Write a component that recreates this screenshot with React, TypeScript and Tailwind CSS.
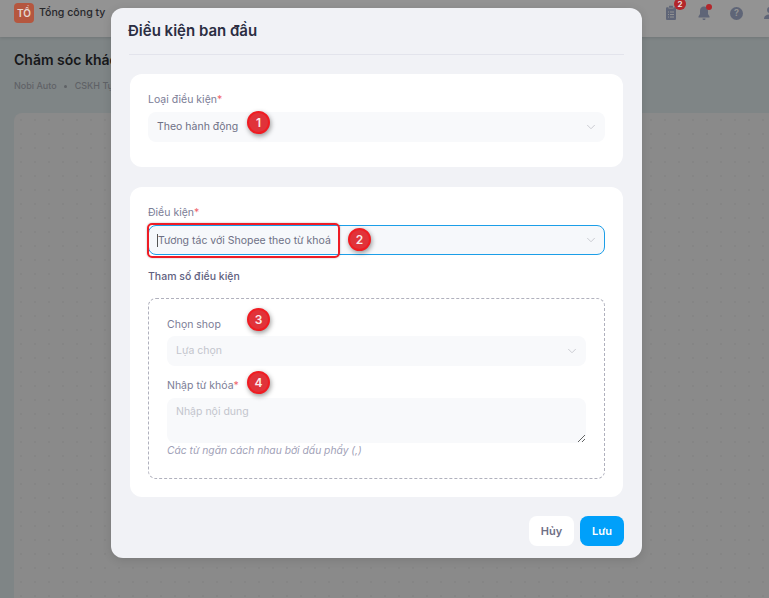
import { ChevronDown } from "lucide-react";

const font = { fontFamily: "Inter, 'Noto Sans', sans-serif" };

function Badge({ n, className }: { n: number; className: string }) {
  return (
    <div
      className={`absolute flex h-[23px] w-[23px] items-center justify-center rounded-full border-2 border-[#f01c22] bg-[#e0333a] text-[12px] font-semibold text-[#fbeaea] shadow-[1px_2px_5px_rgba(0,0,0,0.4)] ${className}`}
    >
      {n}
    </div>
  );
}

function Label({ text, required }: { text: string; required?: boolean }) {
  return (
    <div className="text-[10.5px] leading-[14px] text-[#7b7d96]">
      {text}
      {required && <span className="text-[#f0646c]">*</span>}
    </div>
  );
}

function Select({ value, muted, className }: { value: string; muted?: boolean; className: string }) {
  return (
    <div className={`flex items-center justify-between rounded-lg bg-[#f8f9fb] pl-[9px] pr-[7px] ${className}`}>
      <span className={`text-[10.5px] ${muted ? "text-[#c3c5cd]" : "text-[#6e7085]"}`}>{value}</span>
      <ChevronDown size={14} strokeWidth={1.5} className="text-[#c4c5cb]" />
    </div>
  );
}

function Background() {
  return (
    <div className="flex h-[598px] flex-col bg-[#7f8586]">
      <header className="flex h-[37px] items-start justify-between bg-[#939393] pl-[14px] pt-[3px] shadow-[0_1px_3px_rgba(0,0,0,0.12)]">
        <div className="flex h-5 items-center gap-[5px]">
          <div className="flex h-5 w-5 items-center justify-center rounded bg-[#b5573f] text-[10px] font-semibold text-[#e6d8d2]">
            TỔ
          </div>
          <span className="text-[10.6px] font-medium text-[#26272b]">Tổng công ty</span>
        </div>
        <div className="-mr-1 flex h-5 items-center">
          <div className="relative">
            <svg width="16" height="16" viewBox="0 0 16 16" fill="#5f6577">
              <path d="M3 3.5C3 2.7 3.6 2.2 4.3 2.2H5.5V3.4H10.5V2.2H11.700C12.400 2.200 13 2.700 13 3.500V13.700C13 14.400 12.400 15 11.700 15H4.300C3.600 15 3 14.400 3 13.700Z" />
              <rect x="6" y="0.800" width="4" height="2" rx="0.500" />
              <path d="M7 7H11M7 9.500H11M7 12H11M5 7H6M5 9.500H6M5 12H6" stroke="#939393" strokeWidth="1" />
            </svg>
            <div className="absolute -right-[7px] -top-[7px] flex h-3 w-3 items-center justify-center rounded-full bg-[#b3262b] text-[8px] font-semibold text-[#eee]">
              2
            </div>
          </div>
          <div className="relative ml-[17px]">
            <svg width="16" height="16" viewBox="0 0 16 16" fill="#5f6577">
              <path d="M8 1.500C5.500 1.500 4 3.400 4 5.800V9L2.500 11.500V12.500H13.500V11.500L12 9V5.800C12 3.400 10.500 1.500 8 1.500Z" />
              <path d="M6.500 13.500H9.500C9.500 14.500 8.800 15 8 15C7.200 15 6.500 14.500 6.500 13.500Z" />
            </svg>
            <div className="absolute right-0 -top-px h-[6px] w-[6px] rounded-full bg-[#b3262b]" />
          </div>
          <div className="ml-[18px] flex h-[13px] w-[13px] items-center justify-center rounded-full bg-[#5f6577] text-[9px] font-bold text-[#939393]">
            ?
          </div>
          <svg className="ml-5 shrink-0" width="10" height="14" viewBox="0 0 10 14" fill="#5f6577">
            <circle cx="7" cy="4" r="3" />
            <path d="M1 13C1 9.500 4 8.500 7 8.500C9 8.500 10 9 10 9V13Z" />
          </svg>
        </div>
      </header>
      <div className="px-[14px]">
        <h1 className="mt-[14px] text-[14px] font-semibold leading-[18px] text-[#17181a]">Chăm sóc khách hàng</h1>
        <div className="mt-[11px] flex items-center gap-[7.5px] text-[9px] font-medium leading-3 text-[#5f6266]">
          <span>Nobi Auto</span>
          <span className="h-[3px] w-[3px] rounded-full bg-[#5f6266]" />
          <span>CSKH Tự động</span>
        </div>
      </div>
      <div className="ml-[14px] mt-[21px] flex-1 rounded-tl-lg bg-[#8a8a8a] bg-[radial-gradient(#858585_1px,transparent_1px)] bg-[length:14px_14px]" />
    </div>
  );
}

export default function App() {
  return (
    <div className="relative h-[598px] w-[769px] overflow-hidden" style={font}>
      <Background />

      <div className="absolute left-[111px] top-2 h-[550px] w-[531px] rounded-xl bg-[#f1f2f6] pl-[18px] pr-[18px] shadow-[0_2px_10px_rgba(0,0,0,0.12)]">
        <div className="flex h-[47px] items-center border-b border-[#e3e4ec]">
          <h2 className="-ml-px pt-[1px] text-[15px] font-semibold text-[#2b2d42]">Điều kiện ban đầu</h2>
        </div>

        <section className="ml-px mr-px mt-[19px] h-[93px] rounded-xl bg-white px-[18px] pt-[19px]">
          <Label text="Loại điều kiện" required />
          <Select value="Theo hành động" className="mt-[5px] h-[30px]" />
        </section>

        <section className="mx-px mt-5 h-[310px] rounded-xl bg-white px-[18px] pt-[19px]">
          <Label text="Điều kiện" required />
          <div className="mt-[5px] flex h-[30px] items-center justify-between rounded-lg border border-[#1b9ee8] bg-[#f6f8fb] pl-[8px] pr-[6px]">
            <span className="border-l border-[#555] text-[10.5px] leading-[13px] text-[#6e7085]">Tương tác với Shopee theo từ khoá</span>
            <ChevronDown size={14} strokeWidth={1.5} className="text-[#c4c5cb]" />
          </div>
          <div className="mt-[15px] text-[10.5px] font-medium leading-[14px] text-[#5f6180]">Tham số điều kiện</div>
          <div className="mt-[14px] h-[181px] rounded-lg border border-dashed border-[#b0b1bd] px-[18px] pt-[19px]">
            <Label text="Chọn shop" />
            <Select value="Lựa chọn" muted className="mt-[4px] h-[30px]" />
            <div className="mt-[13px]">
              <Label text="Nhập từ khóa" required />
            </div>
            <textarea
              placeholder="Nhập nội dung"
              className="mt-[5px] block h-[45px] w-full rounded-lg bg-[#f8f9fb] px-[9px] pt-[6px] text-[10.5px] outline-none placeholder:text-[#c3c5cd]"
            />
            <p className="text-[10.3px] italic leading-[14px] text-[#9fa1b7]">Các từ ngăn cách nhau bởi dấu phẩy (,)</p>
          </div>
        </section>

        <footer className="mt-[19px] flex justify-end gap-[6px]">
          <button className="h-[30px] w-[45px] rounded-lg bg-white text-[11px] font-semibold text-[#6e7085]">Hủy</button>
          <button className="h-[30px] w-[44px] rounded-lg bg-[#00a0fa] text-[11px] font-semibold text-white">Lưu</button>
        </footer>
      </div>

      <div className="absolute left-[147px] top-[223px] h-[35px] w-[193px] rounded-[5px] border-2 border-[#ee1c25] shadow-[0_0_2px_rgba(0,0,0,0.3)]" />
      <Badge n={1} className="left-[247px] top-[111px]" />
      <Badge n={2} className="left-[348px] top-[228px]" />
      <Badge n={3} className="left-[247px] top-[308px]" />
      <Badge n={4} className="left-[247px] top-[371px]" />
    </div>
  );
}
